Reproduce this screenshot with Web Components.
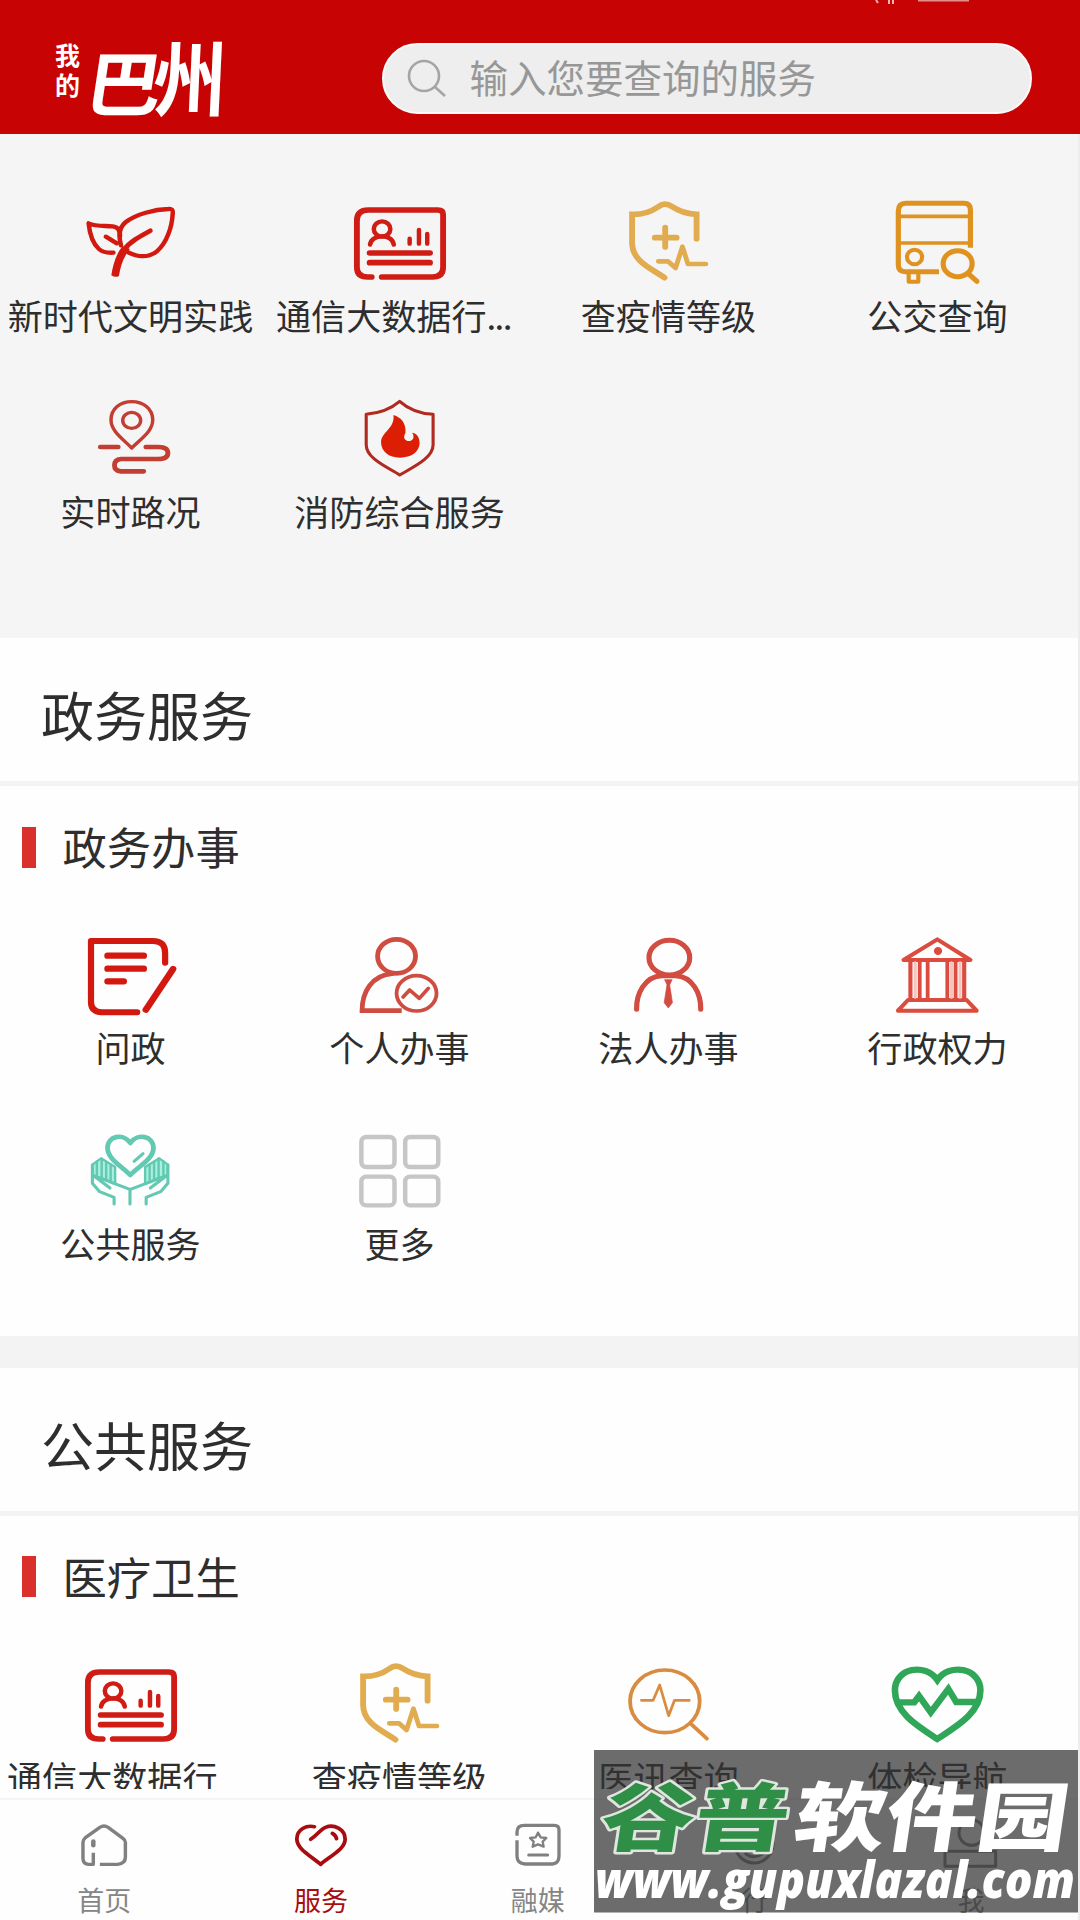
<!DOCTYPE html>
<html lang="zh-CN">
<head>
<meta charset="utf-8">
<title>服务</title>
<style>
  :root {
    --ui-color-brand: #c70303;
    --ui-color-active: #a90c10;
    --ui-color-surface: #f5f5f5;
    --ui-color-line: #f3f3f3;
    --ui-color-text: #2e2e2e;
    --ui-color-mark: #d9302c;
  }

  body {
    margin: 0;
    width: 1080px;
    height: 1920px;
    overflow: hidden;
    background: #fefefe;
    color: var(--ui-color-text);
    font-family: "Noto Sans CJK SC", sans-serif;
  }

  .dots {
    letter-spacing: -1.6px;
  }
</style>
</head>
<body>
<app-shell>
  <app-header slot="header">输入您要查询的服务</app-header>

  <service-grid class="top">
    <service-item icon="leaf">新时代文明实践</service-item>
    <service-item icon="card">通信大数据行<span class="dots">...</span></service-item>
    <service-item icon="shield">查疫情等级</service-item>
    <service-item icon="bus">公交查询</service-item>
    <service-item icon="route">实时路况</service-item>
    <service-item icon="fire">消防综合服务</service-item>
  </service-grid>

  <service-section heading="政务服务" group="政务办事">
    <service-item icon="note">问政</service-item>
    <service-item icon="person">个人办事</service-item>
    <service-item icon="legal">法人办事</service-item>
    <service-item icon="court">行政权力</service-item>
    <service-item icon="hands">公共服务</service-item>
    <service-item icon="more">更多</service-item>
  </service-section>

  <service-section heading="公共服务" group="医疗卫生">
    <service-item icon="card">通信大数据行</service-item>
    <service-item icon="shield">查疫情等级</service-item>
    <service-item icon="pulse">医讯查询</service-item>
    <service-item icon="heart">体检导航</service-item>
  </service-section>

  <tab-bar slot="footer">
    <tab-item icon="home">首页</tab-item>
    <tab-item icon="service" active>服务</tab-item>
    <tab-item icon="media">融媒</tab-item>
    <tab-item icon="smile">行</tab-item>
    <tab-item icon="me">我</tab-item>
  </tab-bar>

  <site-watermark slot="overlay"></site-watermark>
</app-shell>

<script>
const ICONS = {
  leaf: { box: '236 54 290 270', color: '#d3190f', body: `
    <g stroke-width="13"><path d="M349 170C350 154 345 141 328 139C301 137 279 140 258 130C261 160 269 190 288 207Q303 220 330 218M308 170L340 190"/>
    <path d="M352 196C344 166 346 142 366 126C396 103 448 88 490 87Q504 85 502 100C500 142 484 190 456 214C430 235 398 230 373 217"/>
    <path d="M437 152C405 170 377 186 362 208" stroke-width="14"/></g>
    <path d="M357 198L378 207C359 230 350 260 346 288Q336 294 324 286C329 250 340 218 357 198Z" fill="currentColor" stroke="none"/>` },
  card: { box: '1017 54 290 270', color: '#cf1d15', body: `
    <path d="M1080 291H1068Q1037 291 1037 262V122Q1037 90 1070 90H1272Q1287 90 1287 103V262Q1287 291 1256 291H1109" stroke-width="17"/>
    <g stroke-width="13"><ellipse cx="1110" cy="147" rx="24" ry="23"/><path d="M1075 194C1080 161 1140 160 1144 194M1190 176V191M1217 150V191M1241 162V191"/></g>
    <path d="M1074 219H1249M1074 248H1249" stroke-width="17"/>` },
  shield: { box: '230 54 290 270', color: '#e1ac4f', body: `
    <g stroke-width="17"><path d="M455 176V103Q416 102 384 80Q363 65 344 80Q311 104 268 103V188C268 245 325 266 362 293" stroke-linejoin="miter"/>
    <path d="M334 173H397M364 143V201"/></g><path d="M344 244H372L394 264L414 200L430 252H482" stroke-width="14"/>` },
  bus: { box: '1012 54 290 270', color: '#df9220', body: `
    <path d="M1160 275H1062Q1042 275 1042 255V93Q1042 70 1064 70H1232Q1251 70 1251 90V203" stroke-width="15" stroke-linecap="butt"/>
    <path d="M1042 109H1250M1042 189H1250" stroke-width="11"/>
    <g stroke-width="12"><circle cx="1089" cy="231" r="22"/><path d="M1072 278V305H1100V278"/></g>
    <g stroke-width="15"><ellipse cx="1214" cy="251" rx="42" ry="39"/><path d="M1244 280L1270 304"/></g>` },
  route: { box: '236 642 290 270', color: '#c33d32', body: `
    <g stroke-width="10"><path d="M383 804C353 773 323 752 323 720C323 686 350 665 383 665S444 686 444 720C444 752 414 773 383 804Z"/><ellipse cx="383" cy="721" rx="26" ry="24"/></g>
    <path d="M292 801H344M424 801H460Q488 801 488 819T460 837H352Q333 839 333 856T352 874H418" stroke-width="14"/>` },
  fire: { box: '1017 642 290 270', color: '#b02a20', body: `
    <path d="M1161 664Q1200 700 1258 703V794C1258 835 1198 862 1161 885C1123 860 1064 835 1064 794V703Q1124 697 1161 664Z" stroke-width="9"/>
    <path d="M1143 705C1165 712 1180 729 1178 758C1163 784 1196 791 1201 773Q1203 765 1197 758C1214 760 1219 777 1219 790C1217 817 1195 833 1162 833S1107 814 1107 786C1108 756 1148 745 1143 705Z" fill="#dc1f04" stroke="none"/>` },
  note: { box: '236 60 290 270', color: '#d3190f', body: `
    <g stroke-width="18"><path d="M399 307H296Q265 305 265 276V93H444C473 93 480 110 480 130V158"/><path d="M313 137H418M313 176H418M313 214H360M424 299L428 293L503 177" stroke-width="19"/></g>` },
  person: { box: '1017 60 290 270', color: '#cf4c41', body: `
    <g stroke-width="14"><ellipse cx="1152" cy="139" rx="55" ry="51"/><path d="M1160 302H1052C1052 245 1080 197 1138 191" stroke-linecap="square" stroke-linejoin="miter"/></g>
    <g stroke-width="11"><ellipse cx="1210" cy="250" rx="58" ry="53"/><path d="M1171 261L1190 240L1218 265L1244 235"/></g>` },
  legal: { box: '230 60 290 270', color: '#d24c41', body: `
    <g stroke-width="15"><ellipse cx="376" cy="143" rx="59" ry="52"/><path d="M281 298C280 252 304 199 354 197H394C444 199 468 252 467 298"/></g>
    <path d="M363 209H384L377 225L385 278L373 294L361 278L369 225Z" fill="currentColor" stroke="currentColor" stroke-width="2"/>` },
  court: { box: '1012 60 290 270', color: '#db4b3e', body: `
    <g stroke-width="12"><path d="M1057 150L1155 88L1251 150ZM1070 270H1240L1269 302H1041Z"/><circle cx="1157" cy="123" r="6"/>
    <path d="M1077 151V268M1233 151V268"/></g><path d="M1104 151V268M1127 151V268M1184 151V268M1208 151V268" stroke-width="11"/>
    <path d="M1091 158V262M1196 158V262M1221 158V262" stroke="#f7c5bf" stroke-width="9"/>` },
  hands: { box: '236 648 290 270', color: '#62c9b2', body: `
    <path d="M379 795C354 768 313 747 313 714C313 678 357 668 379 699C401 668 446 678 446 714C446 747 404 768 379 795Z" stroke-width="14"/><path d="M390 754L416 731" stroke-width="9"/>
    <g stroke-width="7"><g><path d="M269 764L294 745L335 771V822L297 804L270 795Z" fill="#aaf0df"/><path d="M282 754V796M296 746V804M309 756V808M322 764V814"/><path d="M269 764V820L290 845L332 862V882M270 795L320 834M295 806L378 838V882" stroke-width="9"/></g>
    <g transform="matrix(-1 0 0 1 757 0)"><path d="M269 764L294 745L335 771V822L297 804L270 795Z" fill="#aaf0df"/><path d="M282 754V796M296 746V804M309 756V808M322 764V814"/><path d="M269 764V820L290 845L332 862V882M270 795L320 834M295 806L378 838" stroke-width="9"/></g></g>` },
  more: { box: '1017 648 290 270', color: '#c6c6c6', body: `
    <g stroke-width="13"><rect x="1050" y="681" width="96" height="90" rx="14"/><rect x="1177" y="681" width="96" height="90" rx="14"/>
    <rect x="1050" y="800" width="96" height="86" rx="14"/><rect x="1177" y="800" width="96" height="86" rx="14"/></g>` },
  pulse: { box: '230 60 290 270', color: '#d98c3f', body: `
    <g stroke-width="11"><ellipse cx="363" cy="184" rx="101" ry="94"/><path d="M441 254L485 296"/></g><path d="M295 181H329L348 135L374 227L391 181H434" stroke-width="8"/>` },
  heart: { box: '1012 60 290 270', color: '#30a659', body: `
    <g stroke-width="19" stroke-linejoin="miter"><path d="M1155 297C1097 258 1032 218 1032 151C1032 84 1120 67 1155 120C1190 67 1280 84 1280 151C1280 218 1212 258 1155 297Z"/>
    <path d="M1038 187H1088L1102 168L1136 217L1187 147L1210 186H1274" stroke-linecap="butt"/></g>` },

  home: { box: '216 534 174 162', color: '#808080', body: `
    <g stroke-width="10"><path d="M291 673H343Q365 671 365 652V607Q365 600 358 595L315 562Q303 554 291 562L249 593Q242 600 242 607V656Q243 673 258 673H272V638" stroke-linecap="butt"/><path d="M272 604V616" stroke-width="13"/></g>` },
  service: { box: '845 534 174 162', color: '#a90c10', body: `
    <path d="M913 560C890 555 862 567 862 597C862 628 905 649 931 673C957 649 1002 628 1002 598C1002 566 969 552 945 562C930 568 922 585 902 598M965 580Q975 586 977 596" stroke-width="11"/>` },
  media: { box: '87 54 180 162', color: '#808080', body: `
    <path d="M114 107V96Q114 76 136 76H226Q240 76 240 90V168Q240 190 220 192H138Q114 190 114 168V121" stroke-width="10" stroke-linecap="butt"/>
    <path d="M177 98L185 112L202 114L191 125L194 140L177 133L161 140L164 125L153 114L170 112Z" stroke-width="7"/><path d="M149 165H206" stroke-width="9"/>` },
  smile: { box: '72 54 180 162', color: '#808080', body: `
    <g stroke-width="9"><circle cx="162" cy="132" r="57"/><path d="M137 161Q163 180 188 161"/></g>` },
  me: { box: '724 54 180 162', color: '#808080', body: `
    <g stroke-width="9"><circle cx="816" cy="98" r="38"/><path d="M736 154H888V199H736Z"/></g>` }
};

function drawIcon(name, width, height) {
  const icon = ICONS[name];
  return `<svg width="${width}" height="${height}" viewBox="${icon.box}" preserveAspectRatio="none"
    fill="none" stroke="currentColor" stroke-linecap="round" stroke-linejoin="round" style="color:${icon.color}">${icon.body}</svg>`;
}

class AppShell extends HTMLElement {
  constructor() {
    super();
    this.attachShadow({ mode: 'open' }).innerHTML = `
      <style>
        :host { display: flex; flex-direction: column; position: relative; height: 1920px; overflow: hidden; }
        main { height: 1655px; overflow: hidden; flex: none; }
        .edge { position: absolute; right: 0; top: 134px; bottom: 0; width: 2px; background: #ededed; }
      </style>
      <slot name="header"></slot>
      <main><slot></slot></main>
      <slot name="footer"></slot>
      <div class="edge"></div>
      <slot name="overlay"></slot>
    `;
  }
}

class AppHeader extends HTMLElement {
  constructor() {
    super();
    this.attachShadow({ mode: 'open' }).innerHTML = `
      <style>
        :host { display: flex; flex: none; position: relative; box-sizing: border-box; height: 134px; padding: 36px 48.5px 0 50px;
          justify-content: space-between; background: var(--ui-color-brand); }
        .status { position: absolute; left: 870px; top: 0; }
        .logo { margin-top: -6px; }
        .search { display: flex; align-items: center; box-sizing: border-box; width: 650px; height: 71px; margin-top: 7px;
          padding-left: 22px; border: 2px solid #fafafa; border-radius: 36px; background: #eee;
          color: #979797; font-size: 38.5px; line-height: 60px; white-space: nowrap; }
        .search svg { margin-right: 22px; }
        .search span { margin-top: -5px; }
      </style>
      <svg class="status" width="110" height="5"><path d="M6 0L8 3M19 0V4M23 0V4" stroke="#f3b5b5" stroke-width="2"/><path d="M48 .5H99" stroke="#e58c8c" stroke-width="2"/></svg>
      <svg class="logo" width="190" height="98" viewBox="50 30 190 98" fill="#fff">
        <text x="55" y="65" font-size="25" font-weight="700">我</text>
        <text x="55" y="95" font-size="25" font-weight="700">的</text>
        <text transform="translate(83 110) scale(1.08 1) skewX(-8)" font-size="70" font-weight="700">巴</text>
        <text transform="translate(152 110) scale(.95 1.06) skewX(-3)" font-size="77" font-weight="700">州</text>
      </svg>
      <div class="search">
        <svg width="42" height="40" fill="none" stroke="#a5a5a5" stroke-width="2.6"><circle cx="18" cy="17" r="15"/><path d="M29 28L39 37"/></svg>
        <span><slot></slot></span>
      </div>
    `;
  }
}

class ServiceGrid extends HTMLElement {
  constructor() {
    super();
    this.attachShadow({ mode: 'open' }).innerHTML = `
      <style>
        :host { display: block; box-sizing: border-box; }
        :host(.top) { height: 504px; padding-top: 64px; background: var(--ui-color-surface); }
        .grid { display: grid; grid-template-columns: repeat(4, 269px); grid-auto-rows: 196px; margin-left: -4px; }
      </style>
      <div class="grid"><slot></slot></div>
    `;
  }
}

class ServiceItem extends HTMLElement {
  constructor() {
    super();
    this.attachShadow({ mode: 'open' }).innerHTML = `
      <style>
        :host { display: flex; flex-direction: column; align-items: center; }
        svg { display: block; }
        .label { margin-top: 1px; font-size: 35.1px; line-height: 52px; white-space: nowrap; }
        .label.long { width: 247px; }
      </style>
      ${drawIcon(this.getAttribute('icon'), 100, 90)}
      <div class="label ${this.getAttribute('icon') === 'card' ? 'long' : ''}"><slot></slot></div>
    `;
  }
}

class ServiceSection extends HTMLElement {
  constructor() {
    super();
    this.attachShadow({ mode: 'open' }).innerHTML = `
      <style>
        :host { display: flex; flex-direction: column; box-sizing: border-box; height: 729.5px; border-bottom: 32px solid var(--ui-color-line); }
        h2 { margin: 0; box-sizing: border-box; height: 148px; padding: 13px 0 0 41px; border-bottom: 5px solid var(--ui-color-line);
          font-size: 53px; font-weight: 400; line-height: 126px; }
        h3 { display: flex; align-items: center; margin: 0; height: 122px; gap: 27px; padding-left: 21.5px;
          font-size: 44.3px; font-weight: 400; line-height: 64px; }
        h3::before { content: ""; width: 14px; height: 41px; background: var(--ui-color-mark); }
        h3 span { margin-top: -2px; }
        service-grid { margin-top: 22px; }
      </style>
      <h2>${this.getAttribute('heading')}</h2>
      <h3><span>${this.getAttribute('group')}</span></h3>
      <service-grid><slot></slot></service-grid>
    `;
  }
}

class TabBar extends HTMLElement {
  constructor() {
    super();
    this.attachShadow({ mode: 'open' }).innerHTML = `
      <style>
        :host { display: grid; grid-template-columns: repeat(5, 216.7px); margin: 9px 0 0 -4px; width: 1084px; flex: 1;
          border-top: 2px solid #f5f5f5; }
      </style>
      <slot></slot>
    `;
  }
}

class TabItem extends HTMLElement {
  constructor() {
    super();
    this.attachShadow({ mode: 'open' }).innerHTML = `
      <style>
        :host { display: flex; flex-direction: column; align-items: center; padding-top: 18px; color: #858585; }
        :host([active]) { color: var(--ui-color-active); }
        .label { margin-top: 7.5px; font-size: 27px; line-height: 40px; }
      </style>
      ${drawIcon(this.getAttribute('icon'), 60, 54)}
      <div class="label"><slot></slot></div>
    `;
  }
}

class SiteWatermark extends HTMLElement {
  constructor() {
    super();
    this.attachShadow({ mode: 'open' }).innerHTML = `
      <style>
        :host { position: absolute; left: 594px; top: 1750px; width: 484px; height: 168px; }
        svg { display: block; }
      </style>
      <svg width="484" height="168" viewBox="594 1750 484 168">
        <rect x="594" y="1750" width="484" height="162.5" fill="#333" fill-opacity=".72"/>
        <g font-family="'Noto Sans CJK SC'" font-size="78" font-weight="900">
          <text transform="translate(598 1845) scale(1.2 .95) skewX(-7)" fill="#2f8f46" stroke="#dfe5df" stroke-width="5" paint-order="stroke" stroke-linejoin="round">谷普</text>
          <text transform="translate(791 1845) scale(1.17 .97) skewX(-7)" fill="#fff">软件园</text>
        </g>
        <text x="595" y="1898" textLength="480" lengthAdjust="spacingAndGlyphs" font-family="'Open Sans', 'Noto Sans'" font-size="51" font-weight="800" font-style="italic" fill="#fff">www.gupuxlazal.com</text>
      </svg>
    `;
  }
}

window.customElements.define('app-shell', AppShell);
window.customElements.define('app-header', AppHeader);
window.customElements.define('service-grid', ServiceGrid);
window.customElements.define('service-item', ServiceItem);
window.customElements.define('service-section', ServiceSection);
window.customElements.define('tab-bar', TabBar);
window.customElements.define('tab-item', TabItem);
window.customElements.define('site-watermark', SiteWatermark);
</script>
</body>
</html>
